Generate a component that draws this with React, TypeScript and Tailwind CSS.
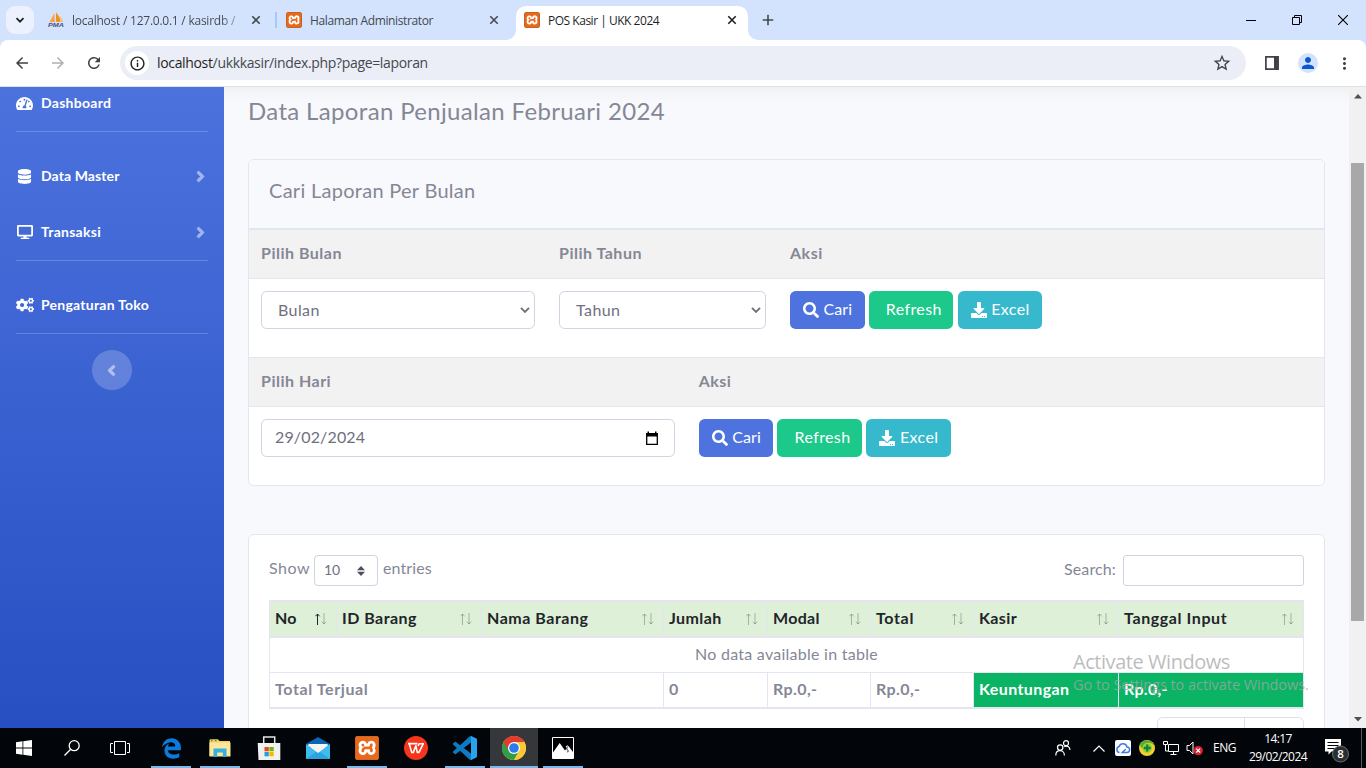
import type { ReactNode } from "react";
import {
  FaAngleLeft,
  FaAngleRight,
  FaCogs,
  FaDatabase,
  FaDesktop,
  FaDownload,
  FaSearch,
  FaTachometerAlt,
} from "react-icons/fa";
import { FaEdgeLegacy } from "react-icons/fa6";
import { MdArrowBack, MdArrowForward, MdInfoOutline, MdMoreVert, MdPerson, MdRefresh, MdStarOutline } from "react-icons/md";
import { SiXampp } from "react-icons/si";

/* ---------- logos ---------- */

function Xampp({ className }: { className: string }) {
  return (
    <span className={`flex shrink-0 rounded-[2px] border border-[#b9602a] bg-white ${className}`}>
      <SiXampp className="size-full scale-[1.060] text-[#e9691c]" />
    </span>
  );
}

function PhpMyAdmin() {
  return (
    <svg viewBox="0 0 16 16" className="size-4">
      <path d="M6.300 1 7 10 1.500 10.300Z" fill="#f5a545" />
      <path d="M8 .5C11.500 4 12.500 8 12.300 10L8 9.800Z" fill="#f29111" />
      <path d="M12 4c2 2 2.800 4 2.800 6h-2Z" fill="#f8bd72" />
      <text x="0" y="15.300" fontSize="6.200" fontWeight="700" fontStyle="italic" fontFamily="Liberation Sans, sans-serif" textLength="16" lengthAdjust="spacingAndGlyphs" fill="#4c4f7c">
        PMA
      </text>
    </svg>
  );
}

/* ---------- browser ---------- */

function CloseX({ color = "#45494d" }: { color?: string }) {
  return (
    <svg viewBox="0 0 10 10" className="size-[10px]">
      <path d="M1.300 1.300l7.400 7.400M8.700 1.300L1.300 8.700" stroke={color} strokeWidth="1.600" />
    </svg>
  );
}

function TabStrip() {
  return (
    <div className="flex h-10 shrink-0 items-start bg-[#d3e3fd] font-['Open_Sans','Noto_Sans',sans-serif] text-[12px]">
      <div className="mt-[6px] ml-[6px] flex size-7 items-center justify-center rounded-[9px] bg-[#ebf2fe]">
        <svg viewBox="0 0 10 10" className="size-[10px]">
          <path d="M1.500 3.200L5 6.700l3.500-3.500" fill="none" stroke="#1f1f1f" strokeWidth="1.700" />
        </svg>
      </div>
      <div className="ml-[14px] flex h-10 w-[227px] items-center">
        <PhpMyAdmin />
        <span className="ml-2 w-[168px] overflow-hidden bg-linear-to-r from-[#43474e] from-88% to-[#43474e]/30 bg-clip-text pt-[2px] tracking-[-0.240px] whitespace-nowrap text-transparent">
          localhost / 127.0.0.1 / kasirdb /
        </span>
        <span className="ml-[11px]">
          <CloseX />
        </span>
      </div>
      <div className="mt-3 h-4 w-[2px] bg-[#a8c7fa]" />
      <div className="ml-[9px] flex h-10 w-[230px] items-center">
        <Xampp className="size-4" />
        <span className="ml-2 w-[179px] pt-[2px] tracking-[-0.370px] text-[#43474e]">Halaman Administrator</span>
        <CloseX />
      </div>
      <div className="relative mt-[6px] flex h-[34px] w-[232px] items-center rounded-t-[10px] bg-white pb-[6px] pl-2">
        <svg viewBox="0 0 10 10" className="absolute bottom-0 -left-[10px] size-[10px]">
          <path d="M10 0A10 10 0 0 1 0 10H10Z" fill="#fff" />
        </svg>
        <svg viewBox="0 0 10 10" className="absolute -right-[10px] bottom-0 size-[10px]">
          <path d="M0 0A10 10 0 0 0 10 10H0Z" fill="#fff" />
        </svg>
        <Xampp className="size-4" />
        <span className="ml-2 w-[179px] pt-[2px] tracking-[-0.480px] text-[#1f1f1f]">POS Kasir | UKK 2024</span>
        <CloseX color="#1f1f1f" />
      </div>
      <svg viewBox="0 0 12 12" className="mt-[14px] ml-[14px] size-3">
        <path d="M6 .7v10.600M.7 6h10.600" stroke="#45494d" strokeWidth="1.600" />
      </svg>
      <div className="mt-[15px] mr-[18px] ml-auto flex gap-9">
        <svg viewBox="0 0 10 10" className="size-[10px]">
          <path d="M0 5.500h10" stroke="#000" />
        </svg>
        <svg viewBox="0 0 10 10" className="size-[10px]">
          <path d="M.5 2.500h7v7h-7zM2.500 2.500v-2h7v7h-2" fill="none" stroke="#000" />
        </svg>
        <svg viewBox="0 0 10 10" className="size-[10px]">
          <path d="M0 0l10 10M10 0L0 10" stroke="#000" strokeWidth="1.100" />
        </svg>
      </div>
    </div>
  );
}

function Toolbar() {
  return (
    <div className="shrink-0 bg-[#d3e3fd]">
      <div className="flex h-[47px] items-center rounded-t-[8px] border-b border-[#dfe0e2] bg-white pl-[13px]">
        <MdArrowBack className="size-[18px] text-[#3f4246]" />
        <MdArrowForward className="ml-[18px] size-[18px] text-[#aeb0b3]" />
        <MdRefresh className="ml-[18px] size-[18px] text-[#3f4246]" />
        <div className="ml-[17px] flex h-[34px] w-[1126px] items-center rounded-full bg-[#ebeef7] pl-[5px]">
          <span className="flex size-6 items-center justify-center rounded-full bg-white">
            <MdInfoOutline className="size-[17px] text-[#1f1f1f]" />
          </span>
          <span className="ml-2 pb-px font-['Open_Sans','Noto_Sans',sans-serif] text-[14px] tracking-[-0.340px] text-[#45494d]">
            <span className="text-[#1f1f1f]">localhost</span>/ukkkasir/index.php?page=laporan
          </span>
          <MdStarOutline className="mr-[14px] ml-auto size-5 text-[#3f4246]" />
        </div>
        <svg viewBox="0 0 14 14" className="ml-[19px] size-[14px]">
          <path d="M.9.900h12.200v12.200H.9z" fill="none" stroke="#3f4246" strokeWidth="1.700" />
          <path d="M9 1h4v12H9z" fill="#3f4246" />
        </svg>
        <span className="ml-[19px] flex size-5 items-center justify-center rounded-full bg-[#d3e3fd]">
          <MdPerson className="size-[18px] text-[#0b57d0]" />
        </span>
        <MdMoreVert className="ml-[17px] size-[19px] text-[#3f4246]" />
      </div>
    </div>
  );
}

/* ---------- sidebar ---------- */

function NavItem({ icon, label, tracking, arrow }: { icon: ReactNode; label: string; tracking: string; arrow?: boolean }) {
  return (
    <div className="flex h-14 items-center text-[14px] font-bold text-white">
      <span className="flex w-[17px] justify-center">{icon}</span>
      <span className={`ml-2 ${tracking}`}>{label}</span>
      {arrow && <FaAngleRight strokeWidth={24} stroke="currentColor" className="-mr-[1px] ml-auto size-[17px] opacity-50" />}
    </div>
  );
}

function Sidebar() {
  return (
    <aside className="flex w-56 shrink-0 flex-col bg-linear-to-b from-[#4c72de] to-[#284fc2] px-4">
      <div className="-mt-3 border-b border-white/20">
        <NavItem icon={<FaTachometerAlt className="size-[17px]" />} label="Dashboard" tracking="tracking-[0.280px]" />
      </div>
      <div className="mt-4 border-b border-white/20">
        <NavItem icon={<FaDatabase className="size-[15px]" />} label="Data Master" tracking="tracking-[0.100px]" arrow />
        <NavItem icon={<FaDesktop className="size-[16px]" />} label="Transaksi" tracking="tracking-[0.270px]" arrow />
      </div>
      <div className="mt-4 border-b border-white/20">
        <NavItem icon={<FaCogs className="size-[18px] shrink-0" />} label="Pengaturan Toko" tracking="tracking-[0.250px]" />
      </div>
      <div className="mt-4 flex size-10 items-center justify-center self-center rounded-full bg-white/20">
        <FaAngleLeft strokeWidth={24} stroke="currentColor" className="mr-[1px] size-[17px] opacity-50 text-white" />
      </div>
    </aside>
  );
}

/* ---------- report content ---------- */

function Heading({ children }: { children: ReactNode }) {
  return <span className="pb-[2px] font-bold tracking-[0.500px]">{children}</span>;
}

function SelectBox({ label, className }: { label: string; className: string }) {
  return (
    <div className={`flex h-[38px] items-center justify-between rounded-[5.600px] border border-[#d1d3e2] bg-white pr-[4px] pl-4 text-[#6e707e] ${className}`}>
      <span className="pb-px tracking-[0.400px]">{label}</span>
      <svg viewBox="0 0 10 6" className="h-[6px] w-[10px]">
        <path d="M1 .9l4 4 4-4" fill="none" stroke="#6e707e" strokeWidth="1.900" />
      </svg>
    </div>
  );
}

function Actions() {
  return (
    <div className="flex gap-[4.300px] text-white">
      <span className="flex h-[38px] w-[74.500px] items-center rounded-[5.600px] bg-[#4e73df] pl-[13px]">
        <FaSearch className="size-4" />
        <span className="ml-[4.500px] pb-[2px] tracking-[0.100px]">Cari</span>
      </span>
      <span className="flex h-[38px] w-[84.600px] items-center rounded-[5.600px] bg-[#1cc88a] pb-[2px] pl-[17px] tracking-[0.390px]">Refresh</span>
      <span className="flex h-[38px] w-[84.500px] items-center rounded-[5.600px] bg-[#36b9cc] pl-[13px]">
        <FaDownload className="size-4" />
        <span className="ml-[4.500px] pb-[2px] tracking-[0.390px]">Excel</span>
      </span>
    </div>
  );
}

function FilterCard() {
  return (
    <section className="mt-[30px] overflow-hidden rounded-[5.600px] border border-[#e3e6f0] bg-white">
      <h2 className="h-[68px] bg-[#f8f9fc] px-5 pt-[15px] text-[20px] leading-[30px] tracking-[0.280px]">Cari Laporan Per Bulan</h2>
      <div className="grid h-[50px] grid-cols-[298px_231px_1fr] items-center border-t-2 border-[#e3e6f0] bg-[#f2f2f2] px-3">
        <Heading>Pilih Bulan</Heading>
        <Heading>Pilih Tahun</Heading>
        <Heading>Aksi</Heading>
      </div>
      <div className="grid h-[79px] grid-cols-[298px_231px_1fr] items-start border-t border-[#e3e6f0] px-3 pt-3">
        <SelectBox label="Bulan" className="w-[274px]" />
        <SelectBox label="Tahun" className="w-[207px]" />
        <Actions />
      </div>
      <div className="grid h-[49px] grid-cols-[437.700px_1fr] items-center border-t border-[#e3e6f0] bg-[#f2f2f2] px-3">
        <Heading>Pilih Hari</Heading>
        <Heading>Aksi</Heading>
      </div>
      <div className="grid h-[79px] grid-cols-[437.700px_1fr] items-start border-t border-[#e3e6f0] px-3 pt-3">
        <div className="flex h-[38px] w-[414px] items-center justify-between rounded-[5.600px] border border-[#d1d3e2] pr-[15px] pl-[13px] text-[#6e707e]">
          <span className="pb-[2px] tracking-[0.150px]">29/02/2024</span>
          <svg viewBox="0 0 14 15" className="h-[15px] w-[14px]">
            <path d="M1.700 2.700h10.600v10.600H1.700z" fill="none" stroke="#000" strokeWidth="1.300" />
            <path d="M1 2h12v3.500H1zM2.500.5h1.500V2H2.500zM10 .5h1.500V2H10z" fill="#000" />
          </svg>
        </div>
        <Actions />
      </div>
    </section>
  );
}

function SortArrows({ active }: { active?: boolean }) {
  return (
    <svg viewBox="0 0 12 12" className="h-3 w-3 text-[#212529]">
      <path d="M2.500 12V1M.3 3.300L2.500 1l2.200 2.300" fill="none" stroke="currentColor" strokeOpacity={active ? 1 : 0.3} />
      <path d="M9 0v11M6.800 8.700L9 11l2.200-2.300" fill="none" stroke="currentColor" strokeOpacity=".3" />
    </svg>
  );
}

const columns: { label: string; tracking: string }[] = [
  { label: "No", tracking: "tracking-[0.150px]" },
  { label: "ID Barang", tracking: "tracking-[0.470px]" },
  { label: "Nama Barang", tracking: "tracking-[0.540px]" },
  { label: "Jumlah", tracking: "tracking-[0.400px]" },
  { label: "Modal", tracking: "tracking-[0.300px]" },
  { label: "Total", tracking: "tracking-[0.650px]" },
  { label: "Kasir", tracking: "tracking-[0.370px]" },
  { label: "Tanggal Input", tracking: "tracking-[0.590px]" },
];

function ReportTable() {
  return (
    <div className="mt-[14px] border-y-2 border-r border-[#e3e6f0]">
      <div className="grid grid-cols-[67px_145px_182px_104px_103px_103px_145px_185px] bg-[#dff0d8] text-[#212529]">
        {columns.map((c, i) => (
          <div key={c.label} className="flex h-[34px] items-center justify-between border-l border-[#e3e6f0] pr-[9px] pl-[5px]">
            <span className={`pb-[2px] font-bold ${c.tracking}`}>{c.label}</span>
            <SortArrows active={i === 0} />
          </div>
        ))}
      </div>
      <div className="flex h-9 items-center justify-center border-t-2 border-l border-[#e3e6f0] pb-[2px] tracking-[0.260px]">No data available in table</div>
      <div className="grid h-[35px] grid-cols-[394px_104px_103px_103px_145px_185px] border-t border-[#e3e6f0] font-bold *:flex *:items-center *:border-l *:border-[#e3e6f0] *:pb-[2px] *:pl-[5px]">
        <div className="tracking-[0.600px]">Total Terjual</div>
        <div>0</div>
        <div className="tracking-[0.400px]">Rp.0,-</div>
        <div className="tracking-[0.400px]">Rp.0,-</div>
        <div className="bg-[#0bb365] tracking-[0.400px] text-white">Keuntungan</div>
        <div className="bg-[#0bb365] tracking-[0.300px] text-white">Rp.0,-</div>
      </div>
    </div>
  );
}

function TableCard() {
  return (
    <section className="mt-12 h-[260px] rounded-[5.600px] border border-[#e3e6f0] bg-white px-5 pt-5">
      <div className="flex h-[31px] justify-between">
        <div className="flex">
          <span className="pt-[1px] tracking-[0.500px]">Show</span>
          <span className="ml-[4px] flex h-[31px] w-16 items-center justify-between rounded-[4px] border border-[#d1d3e2] pr-3 pl-[9px] text-[14px] text-[#6e707e]">
            <span className="pb-[2px]">10</span>
            <svg viewBox="0 0 8 10" className="h-[10px] w-2">
              <path d="M4 0l4 4.200H0zM4 10l4-4.200H0z" fill="#4c4e59" />
            </svg>
          </span>
          <span className="ml-[5px] pt-[1px] tracking-[0.100px]">entries</span>
        </div>
        <div className="flex">
          <span className="pt-[2px] tracking-[0.130px]">Search:</span>
          <span className="ml-[7px] h-[31px] w-[181px] rounded-[3px] border border-[#d1d3e2]" />
        </div>
      </div>
      <ReportTable />
      <div className="mt-2 ml-auto flex h-[38px] w-[147px] rounded-[5.600px] border border-[#dddfeb]">
        <div className="w-[87px] border-r border-[#dddfeb]" />
      </div>
    </section>
  );
}

function Scrollbar() {
  return (
    <div className="flex w-[17px] shrink-0 flex-col items-center bg-[#f1f1f1] py-[6px]">
      <svg viewBox="0 0 8 5" className="mt-[1px] h-[5px] w-2">
        <path d="M4 0l4 4.500H0z" fill="#505050" />
      </svg>
      <div className="mt-16 h-[458px] w-[13px] bg-[#a8a8a8]" />
      <svg viewBox="0 0 8 5" className="mt-auto h-[5px] w-2">
        <path d="M4 4.500l4-4.500H0z" fill="#505050" />
      </svg>
    </div>
  );
}

/* ---------- taskbar ---------- */

function TaskButton({ children, open, active }: { children: ReactNode; open?: boolean; active?: boolean }) {
  return (
    <div className={`flex h-10 w-12 flex-col items-center ${active ? "bg-[#35373a]" : ""}`}>
      <span className="flex h-[38px] items-center pt-[2px]">{children}</span>
      <span className={`h-[2px] ${active ? "w-12" : "w-10"} ${open ? "bg-[#76b9ed]" : ""}`} />
    </div>
  );
}

function Taskbar() {
  return (
    <footer className="flex h-10 shrink-0 bg-[#020509] text-white">
      <TaskButton>
        <svg viewBox="0 0 16 16" className="size-4">
          <path d="M0 2.200L6.500 1.300v6.300H0zM7.300 1.200L16 0v7.600H7.300zM0 8.400h6.500v6.300L0 13.800zM7.300 8.400H16V16l-8.700-1.200z" fill="#fff" />
        </svg>
      </TaskButton>
      <TaskButton>
        <svg viewBox="0 0 16 16" className="size-4">
          <circle cx="10.200" cy="5.700" r="5" fill="none" stroke="#fff" strokeWidth="1.300" />
          <path d="M6.700 9.300L.5 15.500" stroke="#fff" strokeWidth="1.300" />
        </svg>
      </TaskButton>
      <TaskButton>
        <svg viewBox="0 0 20 16" className="h-4 w-5">
          <path d="M4.500 1.500h11v13h-11zM3 3.500H.5v9H3M17 3.500h2.500v9H17" fill="none" stroke="#fff" />
        </svg>
      </TaskButton>
      <div className="ml-[3px] flex gap-px">
        <TaskButton open>
          <FaEdgeLegacy className="size-[21px] text-[#0a7bdc]" />
        </TaskButton>
        <TaskButton open>
          <svg viewBox="0 0 22 18" className="h-[18px] w-[22px]">
            <path d="M.5 1.500Q.5.300 1.500.300h7.500l1.500 1.700H21V17H.5z" fill="#f3cf63" />
            <path d="M.5 3.500H21.500V17.500H.5z" fill="#ffe69b" />
            <path d="M2 .8h1.500v1.500H2zM6 .8h1.500v1.500H6z" fill="#43a047" />
            <path d="M4.500 9.500h13v8.500h-3.700v-4.500H8.200V18H4.500z" fill="#35aee2" />
          </svg>
        </TaskButton>
        <TaskButton>
          <svg viewBox="0 0 24 24" className="size-6">
            <path d="M6.700 7V1h11v6" fill="none" stroke="#e8e8e8" strokeWidth="1.500" />
            <path d="M.7 7h22.600v17H1.500z" fill="#f1f1f1" />
            <path d="M7.500 11h4.300v4.300H7.500z" fill="#e64a19" />
            <path d="M12.400 11h4.300v4.300h-4.300z" fill="#7cb300" />
            <path d="M7.500 16h4.300v4.300H7.500z" fill="#1ba1e2" />
            <path d="M12.400 16h4.300v4.300h-4.300z" fill="#fbb700" />
          </svg>
        </TaskButton>
        <TaskButton>
          <svg viewBox="0 0 24 22" className="h-[22px] w-6">
            <path d="M0 7L12 0l12 7v15H0z" fill="#0b64b4" />
            <path d="M2 7.500h20l-10 9z" fill="#f3f3f3" />
            <path d="M0 7l12 9 12-9v15H0z" fill="#3dbcf0" />
            <path d="M0 22l12-8.500L24 22z" fill="#2aa5e0" />
            <path d="M2 8.400L12 16l10-7.600-1-1.400H3z" fill="#f5f5f5" />
          </svg>
        </TaskButton>
        <TaskButton open>
          <Xampp className="size-6" />
        </TaskButton>
        <TaskButton>
          <svg viewBox="0 0 24 24" className="size-6">
            <circle cx="12" cy="12" r="12" fill="#f5361b" />
            <path d="M4 7.600h9.500M5.400 8.200l2.300 8.200h1.600l2.600-6.600 1.400 6.600h1.700l4.300-8.700h-4.200l-1 2.300" fill="none" stroke="#fff" strokeWidth="1.600" strokeLinejoin="round" />
          </svg>
        </TaskButton>
        <TaskButton open>
          <svg viewBox="0 0 24 24" className="size-6">
            <path
              d="M23.150 2.587L18.210.210a1.494 1.494 0 0 0-1.705.290l-9.460 8.630-4.120-3.128a.999.999 0 0 0-1.276.057L.327 7.261A1 1 0 0 0 .326 8.740L3.899 12 .326 15.260a1 1 0 0 0 .001 1.479L1.650 17.940a.999.999 0 0 0 1.276.057l4.120-3.128 9.460 8.630a1.492 1.492 0 0 0 1.704.290l4.942-2.377A1.500 1.500 0 0 0 24 20.060V3.939a1.500 1.500 0 0 0-.850-1.352zm-5.146 14.861L10.826 12l7.178-5.448v10.896z"
              fill="#0d7bc4"
            />
            <path d="M18 .1l5.150 2.487A1.500 1.500 0 0 1 24 3.939V20.060a1.500 1.500 0 0 1-.85 1.352L18 23.900z" fill="#2aa3ec" />
          </svg>
        </TaskButton>
        <TaskButton open active>
          <svg viewBox="0 0 24 24" className="size-6">
            <circle cx="12" cy="12" r="12" fill="#fcc934" />
            <path d="M12 12L1.600 6A12 12 0 0 0 12 24l5.200-9z" fill="#2f9e4b" />
            <path d="M12 6h10.400A12 12 0 0 0 1.600 6l5.200 9z" fill="#e33b2e" />
            <path d="M17.200 15L12 24A12 12 0 0 0 22.400 6H12z" fill="#fcc934" />
            <circle cx="12" cy="12" r="6" fill="#fff" />
            <circle cx="12" cy="12" r="4.800" fill="#2a7af0" />
          </svg>
        </TaskButton>
        <TaskButton open>
          <svg viewBox="0 0 22 22" className="size-[22px]">
            <path d="M.5.500h21v21H.5z" fill="#000" stroke="#fff" />
            <path d="M1 15.500L7.700 6l5.300 7.500 1.500-2-.8-2 1.800-1.200 1.700 1.700L21 15v6.500H1z" fill="#fff" />
            <path d="M15.300 9.500l-.6 2.500 1.500 1.800-.5 1.500" stroke="#000" strokeWidth=".9" fill="none" />
          </svg>
        </TaskButton>
      </div>

      <div className="ml-auto flex items-center font-['Open_Sans','Noto_Sans',sans-serif] text-[12px]">
        <svg viewBox="0 0 16 16" className="size-4">
          <g fill="none" stroke="#fff" strokeWidth="1.200">
            <circle cx="5.200" cy="7.600" r="2.700" />
            <path d="M.8 15.500c0-6.400 8.600-6.400 8.600 0" />
            <circle cx="11" cy="3.200" r="2.500" />
            <path d="M9.300 6.700c2.700-1.500 5.500 0 5.700 3.300" />
          </g>
        </svg>
        <svg viewBox="0 0 12 7" className="ml-[22px] h-[7px] w-3">
          <path d="M.5 6.500L6 1l5.500 5.500" fill="none" stroke="#fff" strokeWidth="1.200" />
        </svg>
        <svg viewBox="0 0 16 16" className="ml-[10px] size-4">
          <rect width="16" height="16" rx="2" fill="#fff" />
          <path d="M4.500 12.500a3 3 0 0 1-.3-5.900 4 4 0 0 1 7.700.3 2.800 2.800 0 0 1-.2 5.600H7.200l3.500-3.300" fill="none" stroke="#3a7ceb" strokeWidth="1.500" />
        </svg>
        <svg viewBox="0 0 16 16" className="ml-2 size-4">
          <circle cx="8" cy="8" r="8" fill="#f5cf2a" />
          <path d="M1.200 4A8 8 0 0 1 15.600 6Q12.500 2.200 8.500 2.800 4 3.500 3.200 8.500 1 7 1.200 4z" fill="#4fae35" />
          <circle cx="8.200" cy="8" r="4.800" fill="#8fd13f" />
          <path d="M8.200 4.500v7M4.700 8h7" stroke="#17813a" strokeWidth="2.300" />
        </svg>
        <svg viewBox="0 0 16 14" className="ml-2 h-[14px] w-4">
          <path d="M5.500 3.500h10v7h-10zM10.500 10.500v3M7.500 13.500h6M.5.500h4v3h-4zM2.500 3.500v6.500H5" fill="none" stroke="#fff" />
        </svg>
        <svg viewBox="0 0 18 16" className="ml-[7px] h-4 w-[18px]">
          <path d="M1 5.500h2.500L7 2v12l-3.500-3.500H1z" fill="none" stroke="#fff" />
          <circle cx="12.200" cy="10.600" r="4.700" fill="#d8232e" />
          <path d="M10.300 8.700l3.800 3.800M14.100 8.700l-3.800 3.800" stroke="#fff" strokeWidth="1.200" />
        </svg>
        <span className="ml-[9px] w-[36px] tracking-[-0.500px]">ENG</span>
        <div className="w-[58px] text-center leading-[18px] tracking-[-0.570px] whitespace-nowrap">
          <div>14:17</div>
          <div>29/02/2024</div>
        </div>
        <svg viewBox="0 0 24 26" className="mt-[6px] ml-[18px] h-[26px] w-6">
          <path d="M0 1h16v12.500H6.500L3.500 16.500V13.500H0z" fill="#fff" />
          <path d="M2.500 4.500h11M2.500 7.500h11M2.500 10.500h7" stroke="#020509" strokeWidth="1.100" />
          <circle cx="15.500" cy="16" r="8" fill="#2b2d30" stroke="#6b6d70" />
          <text x="15.500" y="20" textAnchor="middle" fontSize="11.500" fontWeight="600" fill="#fff" fontFamily="Open Sans, sans-serif">
            8
          </text>
        </svg>
        <span className="mr-1 ml-[12px] h-10 w-px bg-[#55585c]" />
      </div>
    </footer>
  );
}

export default function App() {
  return (
    <div className="relative flex h-[768px] w-[1366px] flex-col overflow-hidden bg-white">
      <TabStrip />
      <Toolbar />
      <div className="flex min-h-0 flex-1 font-['Lato','Noto_Sans',sans-serif] text-[16px] leading-6 text-[#858796]">
        <Sidebar />
        <main className="min-w-0 flex-1 overflow-hidden bg-[#f8f9fc] bg-linear-to-b from-[#f1f2f6] to-[#f8f9fc] to-[16px] px-6">
          <h1 className="mt-[9px] h-[33px] text-[24px] leading-[29px] tracking-[0.340px]">Data Laporan Penjualan Februari 2024</h1>
          <FilterCard />
          <TableCard />
        </main>
        <Scrollbar />
      </div>
      <Taskbar />
      <div className="pointer-events-none absolute top-[649px] left-[1073px] font-['Open_Sans','Noto_Sans',sans-serif] whitespace-nowrap text-[#a6a6a6]/75">
        <div className="text-[20px] leading-[26px] tracking-[-0.450px]">Activate Windows</div>
        <div className="text-[14.500px] leading-[20px] tracking-[-0.050px]">Go to Settings to activate Windows.</div>
      </div>
    </div>
  );
}
